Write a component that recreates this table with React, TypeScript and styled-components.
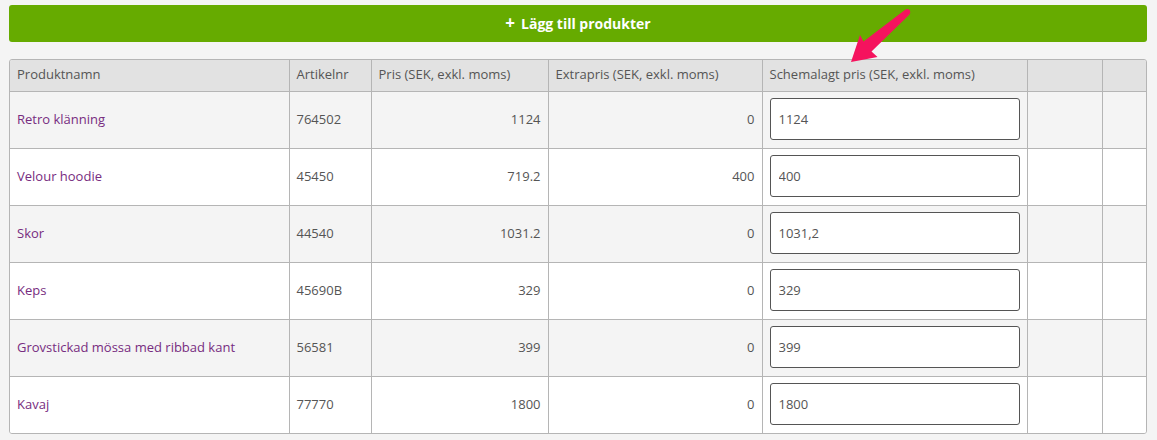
import styled, { createGlobalStyle } from 'styled-components';

const GlobalStyle = createGlobalStyle`
  html, body {
    margin: 0;
    padding: 0;
    background: #f4f4f4;
    font-family: "Open Sans", "Liberation Sans", sans-serif;
    font-size: 13px;
    color: #555;
  }
`;

type Product = {
  name: string;
  sku: string;
  price: string;
  extra: string;
  scheduled: string;
};

const products: Product[] = [
  { name: 'Retro klänning', sku: '764502', price: '1124', extra: '0', scheduled: '1124' },
  { name: 'Velour hoodie', sku: '45450', price: '719.2', extra: '400', scheduled: '400' },
  { name: 'Skor', sku: '44540', price: '1031.2', extra: '0', scheduled: '1031,2' },
  { name: 'Keps', sku: '45690B', price: '329', extra: '0', scheduled: '329' },
  { name: 'Grovstickad mössa med ribbad kant', sku: '56581', price: '399', extra: '0', scheduled: '399' },
  { name: 'Kavaj', sku: '77770', price: '1800', extra: '0', scheduled: '1800' },
];

const widths = [279, 82, 177, 214, 265, 75, 44];

const App = () => {
  return (
    <Page>
      <GlobalStyle />
      <AddButton>
        <Plus>+</Plus> Lägg till produkter
      </AddButton>
      <TableWrap>
        <Table>
          <colgroup>
            {widths.map((w, i) => (
              <col key={i} style={{ width: w }} />
            ))}
          </colgroup>
          <thead>
            <tr>
              <Th>Produktnamn</Th>
              <Th>Artikelnr</Th>
              <Th>Pris (SEK, exkl. moms)</Th>
              <Th>Extrapris (SEK, exkl. moms)</Th>
              <Th>Schemalagt pris (SEK, exkl. moms)</Th>
              <Th />
              <Th />
            </tr>
          </thead>
          <tbody>
            {products.map((p, i) => (
              <Row key={p.sku} $striped={i % 2 === 0}>
                <Td>
                  <ProductLink href="#">{p.name}</ProductLink>
                </Td>
                <Td>{p.sku}</Td>
                <Td $right>{p.price}</Td>
                <Td $right>{p.extra}</Td>
                <Td>
                  <PriceInput defaultValue={p.scheduled} />
                </Td>
                <Td />
                <Td />
              </Row>
            ))}
          </tbody>
        </Table>
      </TableWrap>
      {/* annotation arrow pointing at the scheduled price column */}
      <Arrow width="80" height="70" viewBox="0 0 80 70">
        <path
          d="M1 62 L10 35 L13.5 41.5 L55.5 9.5 Q58.5 8 60 10.5 Q61 13 59 15 L21.5 51.5 L27.5 57 Z"
          fill="#f5135e"
        />
      </Arrow>
    </Page>
  );
};

const Page = styled.div`
  position: relative;
  padding: 5px 10px 0 9px;
`;

const AddButton = styled.button`
  display: flex;
  align-items: center;
  justify-content: center;
  gap: 6px;
  width: 100%;
  height: 37px;
  background-color: #66ab00;
  color: #fff;
  border: none;
  border-radius: 3px;
  font-family: "Open Sans", "Liberation Sans", sans-serif;
  font-size: 14px;
  font-weight: 700;
  cursor: pointer;
`;

const Plus = styled.span`
  font-size: 17px;
  line-height: 1;
  margin-top: -2px;
`;

const TableWrap = styled.div`
  margin-top: 17px;
  border: 1px solid #b5b5b5;
  border-radius: 3px;
  overflow: hidden;
`;

const Table = styled.table`
  width: 100%;
  border-collapse: collapse;
  table-layout: fixed;
`;

const Th = styled.th`
  height: 31px;
  padding: 0 7px 3px;
  box-sizing: border-box;
  background: #e2e2e2;
  text-align: left;
  font-weight: 400;
  color: #555;
  border-right: 1px solid #b5b5b5;
  border-bottom: 1px solid #b5b5b5;
  white-space: nowrap;

  &:last-child {
    border-right: none;
  }
`;

const Row = styled.tr<{ $striped: boolean }>`
  background: ${(p) => (p.$striped ? '#f4f4f4' : '#fff')};

  &:last-child td {
    border-bottom: none;
  }
`;

const Td = styled.td<{ $right?: boolean }>`
  height: 57px;
  box-sizing: border-box;
  padding: 0 7px 2px;
  text-align: ${(p) => (p.$right ? 'right' : 'left')};
  border-right: 1px solid #b5b5b5;
  border-bottom: 1px solid #b5b5b5;
  vertical-align: middle;
  white-space: nowrap;

  &:last-child {
    border-right: none;
  }
`;

const ProductLink = styled.a`
  color: #772c80;
  text-decoration: none;
`;

const PriceInput = styled.input`
  box-sizing: border-box;
  display: block;
  width: 250px;
  height: 42px;
  padding: 0 8px;
  border: 1px solid #555;
  border-radius: 3px;
  background: #fff;
  font-family: "Open Sans", "Liberation Sans", sans-serif;
  font-size: 13px;
  color: #555;
`;

const Arrow = styled.svg`
  position: absolute;
  left: 850px;
  top: 0;
  overflow: visible;
  pointer-events: none;
`;

export default App;
